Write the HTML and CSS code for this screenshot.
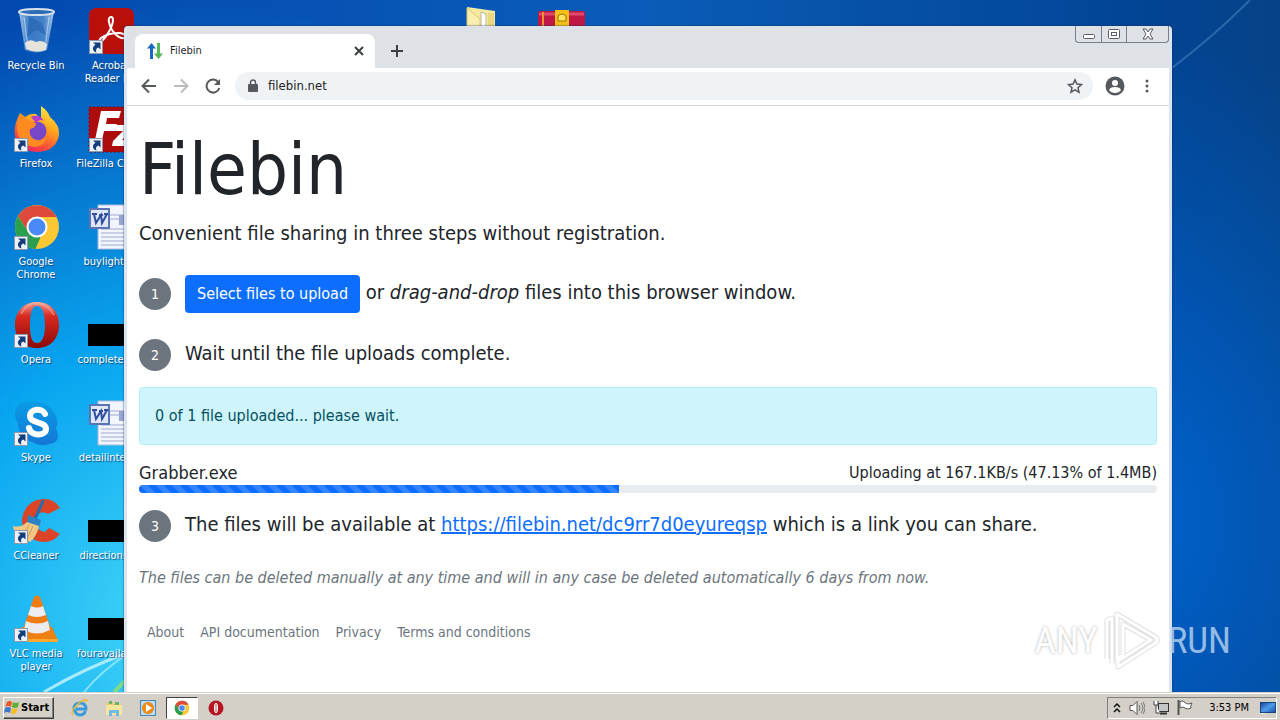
FILE: index.html
```html
<!DOCTYPE html>
<html lang="en">
<head>
    <meta charset="UTF-8">
    <meta name="viewport" content="width=device-width, initial-scale=1.0">
    <title>Filebin</title>
    <link rel="stylesheet" href="styles.css">
</head>
<body>
    <svg class="defs" aria-hidden="true">
        <defs>
            <linearGradient id="fox" x1="0.8" y1="0" x2="0.3" y2="1">
                <stop offset="0" stop-color="#fff04a"/>
                <stop offset="0.4" stop-color="#ffa61e"/>
                <stop offset="0.75" stop-color="#ff5136"/>
                <stop offset="1" stop-color="#e8246b"/>
            </linearGradient>
            <linearGradient id="opera-red" x1="0" y1="0" x2="0" y2="1">
                <stop offset="0" stop-color="#f4a095"/>
                <stop offset="0.3" stop-color="#d92a20"/>
                <stop offset="1" stop-color="#8c0a08"/>
            </linearGradient>
            <linearGradient id="glass" x1="0" y1="0" x2="1" y2="0">
                <stop offset="0" stop-color="#a9cbed"/>
                <stop offset="0.3" stop-color="#3f7fc8"/>
                <stop offset="0.7" stop-color="#4a88cc"/>
                <stop offset="1" stop-color="#b4d0ee"/>
            </linearGradient>
            <linearGradient id="skype-blue" x1="0" y1="0" x2="0" y2="1">
                <stop offset="0" stop-color="#0a9ce6"/>
                <stop offset="1" stop-color="#1477d6"/>
            </linearGradient>
            <linearGradient id="screen-blue" x1="0" y1="0" x2="1" y2="1">
                <stop offset="0" stop-color="#123f96"/>
                <stop offset="0.5" stop-color="#4d9bea"/>
                <stop offset="1" stop-color="#1450a8"/>
            </linearGradient>
        </defs>
        <symbol id="arrow" viewBox="0 0 14 14">
            <rect width="14" height="14" fill="#eef1f6"/>
            <rect x="0.5" y="0.5" width="13" height="13" fill="none" stroke="#8d9aae"/>
            <path d="M4 2.500h7.500v7L9.300 7.500C7 8.500 6.500 10 7.500 12.500C3.500 11.500 2.500 7 6.500 4.800z" fill="#143f7d"/>
        </symbol>
        <symbol id="chrome" viewBox="0 0 48 48">
            <circle cx="24" cy="24" r="22" fill="#fbc834"/>
            <path d="M24 14h19.500A22 22 0 0 0 5 13L15.300 29z" fill="#dd4a3c"/>
            <path d="M5 13L15.300 29A10 10 0 0 0 28 33L22.500 46A22 22 0 0 1 5 13z" fill="#2b9f50"/>
            <circle cx="24" cy="24" r="10.500" fill="#fff"/>
            <circle cx="24" cy="24" r="8.500" fill="#4a8af4"/>
        </symbol>
        <symbol id="word" viewBox="0 0 48 48">
            <path d="M11 2h27l8 7v37H11z" fill="#f3f5fc" stroke="#aeb8da"/>
            <path d="M22 12h20M22 16h20M14 26h28M14 30h28M14 34h28M14 38h28M14 42h28" stroke="#9fabce"/>
            <rect x="32" y="12" width="12" height="10" fill="#97a5d0"/>
            <rect x="3" y="6" width="19" height="19" fill="#dfe6f8" stroke="#5a74b6" stroke-width="2"/>
            <path d="M7 11L9 20L14 12L15 20L20 11M5 11h5M12 12h4M17 11h4" fill="none" stroke="#2f4f9e" stroke-width="2"/>
        </symbol>
        <symbol id="console" viewBox="0 0 48 48">
            <rect x="1" y="23" width="46" height="22" fill="#000"/>
        </symbol>
    </svg>

    <div class="desktop">
        <main class="workspace">
            <svg class="wallpaper" viewBox="0 0 1280 692" preserveAspectRatio="none" aria-hidden="true">
                <path d="M44 692Q85 668 130 652" fill="none" stroke="#c8f5ff" stroke-width="3" opacity="0.8"/>
                <path d="M84 692Q100 672 130 652" fill="none" stroke="#b0f0ff" stroke-width="2" opacity="0.7"/>
                <path d="M114 692L130 676" stroke="#7cdc8a" stroke-width="4"/>
                <path d="M1172 68Q1215 35 1250 0" fill="none" stroke="#5b93cc" stroke-width="2" opacity="0.45"/>
            </svg>

            <div class="icons">
                <button class="shortcut">
                    <svg viewBox="0 0 48 48">
                        <path d="M7 5L13 43Q24 48 35 43L42 5z" fill="url(#glass)" opacity="0.9"/>
                        <path d="M17 10l13 6l4 12l-10-5l-9 7z" fill="#205ca8" opacity="0.5"/>
                        <path d="M13 36Q18 31 24 35Q30 32 35 37L34 43Q24 47 14 42z" fill="#e6e3dc"/>
                        <ellipse cx="24.500" cy="5" rx="17.500" ry="3" fill="#2e6cb5" stroke="#d5e0ec" stroke-width="2"/>
                        <path d="M12 10l4 31M37 10l-4 31" stroke="#dcecfb" opacity="0.6"/>
                    </svg>
                    <span>Recycle Bin</span>
                </button>
                <button class="shortcut col-2">
                    <svg viewBox="0 0 48 48">
                        <rect x="2" y="1" width="45" height="46" rx="7" fill="#b90f0b"/>
                        <path d="M24 10C20 10 22 18 25 23C29 29 34 32 37 31C40 30 38 26 32 26C25 26 18 28 14 31C11 34 13 36 16 33C21 28 26 18 26 13Q26 10 24 10z" fill="none" stroke="#fff" stroke-width="2"/>
                        <use href="#arrow" x="2" y="33" width="14" height="14"/>
                    </svg>
                    <span>Acrobat Reader DC</span>
                </button>
                <button class="shortcut row-2">
                    <svg viewBox="0 0 48 48">
                        <path d="M29 1Q36 6 38 12Q48 20 47 30Q44 46 26 47Q7 47 3 31Q1 21 8 8L13 12Q18 8 24 9L29 14z" fill="url(#fox)"/>
                        <circle cx="25" cy="26" r="9.500" fill="#7747c9"/>
                        <path d="M19 12Q27 8 32 16Q28 13 24 18z" fill="#b53ad0"/>
                        <path d="M8 9Q15 16 24 18Q24 23 18 24Q16 33 25 35Q32 36 36 30Q32 45 18 41Q5 36 5 22z" fill="#ff8a22"/>
                        <use href="#arrow" x="2" y="33" width="14" height="14"/>
                    </svg>
                    <span>Firefox</span>
                </button>
                <button class="shortcut row-2 col-2">
                    <svg viewBox="0 0 48 48">
                        <rect x="2" y="2" width="45" height="45" fill="#ad0c0d" stroke="#7b0b12" stroke-dasharray="2 2"/>
                        <path d="M14 6H34L32 13H20L19 19H30L28 26H17L14 40H7z" fill="#fff"/>
                        <path d="M29 20H46L45 25L35 35H43L42 41H25L26 36L36 26H28z" fill="#fff"/>
                        <use href="#arrow" x="2" y="33" width="14" height="14"/>
                    </svg>
                    <span>FileZilla Client</span>
                </button>
                <button class="shortcut row-3">
                    <svg viewBox="0 0 48 48">
                        <use href="#chrome" x="1" width="48" height="48"/>
                        <use href="#arrow" x="2" y="33" width="14" height="14"/>
                    </svg>
                    <span>Google Chrome</span>
                </button>
                <button class="shortcut row-3 col-2">
                    <svg viewBox="0 0 48 48"><use href="#word" width="48" height="48"/></svg>
                    <span>buylight.rtf</span>
                </button>
                <button class="shortcut row-4">
                    <svg viewBox="0 0 48 48">
                        <path fill-rule="evenodd" d="M25 1C39 1 47 11 47 24S39 47 25 47S3 37 3 24S11 1 25 1zM25 5C20 5 18 12 18 24S20 42 25 42S33 36 33 24S30 5 25 5z" fill="url(#opera-red)"/>
                        <path d="M9 13Q15 2 25 2Q36 3 42 14" fill="none" stroke="#f9c8c0" stroke-width="2" opacity="0.4"/>
                        <use href="#arrow" x="2" y="33" width="14" height="14"/>
                    </svg>
                    <span>Opera</span>
                </button>
                <button class="shortcut row-4 col-2">
                    <svg viewBox="0 0 48 48"><use href="#console" width="48" height="48"/></svg>
                    <span>completed.rtf</span>
                </button>
                <button class="shortcut row-5">
                    <svg viewBox="0 0 48 48">
                        <path d="M4 10Q7 2 16 3Q35 0 43 15Q47 23 44 29Q50 43 38 45Q28 48 20 43Q5 37 6 24Q1 18 4 10z" fill="url(#skype-blue)"/>
                        <path d="M33 15C31 9 18 9 18 17C18 25 34 22 34 30C34 37 19 38 17 29" fill="none" stroke="#fff" stroke-width="6" stroke-linecap="round"/>
                        <use href="#arrow" x="2" y="33" width="14" height="14"/>
                    </svg>
                    <span>Skype</span>
                </button>
                <button class="shortcut row-5 col-2">
                    <svg viewBox="0 0 48 48"><use href="#word" width="48" height="48"/></svg>
                    <span>detailinter.rtf</span>
                </button>
                <button class="shortcut row-6">
                    <svg viewBox="0 0 48 48">
                        <path d="M48 11L36 17Q28 12 23 22Q22 33 33 35L37 31L48 37Q39 48 25 44Q10 38 10 22Q13 4 30 2Q42 1 48 11z" fill="#db4427"/>
                        <path d="M31 4L23 22" stroke="#216eb0" stroke-width="3" stroke-linecap="round"/>
                        <path d="M16 18L29 23L27 31L15 26z" fill="#2d82c5"/>
                        <path d="M15 25L27 29Q25 39 18 45L5 39Q1 32 1 29Q9 31 15 25z" fill="#f0c783"/>
                        <path d="M17 28L10 40M21 29L15 42" stroke="#d19d52"/>
                        <use href="#arrow" x="2" y="33" width="14" height="14"/>
                    </svg>
                    <span>CCleaner</span>
                </button>
                <button class="shortcut row-6 col-2">
                    <svg viewBox="0 0 48 48"><use href="#console" width="48" height="48"/></svg>
                    <span>directions.rtf</span>
                </button>
                <button class="shortcut row-7">
                    <svg viewBox="0 0 48 48">
                        <path d="M10 32H40L46 46H4z" fill="#ee8114"/>
                        <path d="M4 44H46V47H4z" fill="#ffa72f"/>
                        <path d="M22 2Q25 -1 28 2L39 34Q25 46 11 34z" fill="#f07c16"/>
                        <path d="M19 11Q25 14 31 11L34 20Q25 24 16 20z" fill="#eeeef1"/>
                        <path d="M14 26Q25 31 36 26L38 35Q25 42 12 35z" fill="#ececef"/>
                        <use href="#arrow" x="2" y="33" width="14" height="14"/>
                    </svg>
                    <span>VLC media player</span>
                </button>
                <button class="shortcut row-7 col-2">
                    <svg viewBox="0 0 48 48"><use href="#console" width="48" height="48"/></svg>
                    <span>fouravaila.jpg</span>
                </button>
                <button class="shortcut col-7" aria-label="Folder">
                    <svg viewBox="0 0 48 48">
                        <path d="M5 0L33 4V30H5z" fill="#f5e8a0"/>
                        <path d="M19 5L24 7V30H19z" fill="#fff" stroke="#b8bba0"/>
                        <path d="M5 1L18 12V30H5z" fill="#f9efb0" stroke="#d9c770"/>
                        <path d="M26 6h6V30H26z" fill="#ead77d"/>
                    </svg>
                </button>
                <button class="shortcut col-8" aria-label="Archive">
                    <svg viewBox="0 0 48 48">
                        <rect x="1" y="4" width="47" height="24" rx="2" fill="#c01845"/>
                        <path d="M2 7h45" stroke="#dd4a6c" stroke-width="3"/>
                        <path d="M6 5v19" stroke="#f0902c" stroke-width="2"/>
                        <rect x="18" y="3" width="14" height="24" fill="#f3c018"/>
                        <path d="M21 14V9Q25 5 29 9V14z" fill="#ffe35c" stroke="#a36b08"/>
                    </svg>
                </button>
            </div>

            <section class="window">
                <header class="tab-strip">
                    <div class="tab">
                        <svg width="16" height="16" viewBox="0 0 16 16">
                            <path d="M4.500 0L9 5.500H6V16H3V5.500H0z" fill="#1769c2"/>
                            <path d="M10 0H13V10.500H16L11.500 16L7 10.500H10z" fill="#55b95b"/>
                        </svg>
                        <span class="tab-title">Filebin</span>
                        <button class="icon-button" aria-label="Close tab">
                            <svg width="10" height="10" viewBox="0 0 10 10"><path d="M1 1l8 8M9 1l-8 8" stroke="#3c4043" stroke-width="2"/></svg>
                        </button>
                    </div>
                    <button class="icon-button new-tab" aria-label="New tab">
                        <svg width="12" height="12" viewBox="0 0 12 12"><path d="M6 0v12M0 6h12" stroke="#3c4043" stroke-width="2"/></svg>
                    </button>
                    <div class="window-controls">
                        <button aria-label="Minimize">
                            <svg width="14" height="12" viewBox="0 0 14 12"><rect x="1.500" y="6.500" width="11" height="4" rx="1" fill="#fff" stroke="#555b66"/></svg>
                        </button>
                        <button aria-label="Maximize">
                            <svg width="12" height="12" viewBox="0 0 12 12"><rect x="0.500" y="1.500" width="11" height="9" rx="1" fill="#fff" stroke="#555b66"/><rect x="3.500" y="4.500" width="5" height="3" fill="#fff" stroke="#555b66"/></svg>
                        </button>
                        <button class="close" aria-label="Close">
                            <svg width="12" height="12" viewBox="0 0 12 12"><path d="M1 1h3l2 3l2-3h3L8 6l3 5H8L6 8l-2 3H1l3-5z" fill="#fff" stroke="#555b66"/></svg>
                        </button>
                    </div>
                </header>

                <nav class="toolbar">
                    <button class="icon-button" aria-label="Back">
                        <svg width="16" height="16" viewBox="0 0 16 16"><path d="M15 8H2M8 1.500L1.500 8L8 14.500" fill="none" stroke="#55585c" stroke-width="2"/></svg>
                    </button>
                    <button class="icon-button" aria-label="Forward" disabled>
                        <svg width="16" height="16" viewBox="0 0 16 16"><path d="M1 8H14M8 1.500L14.500 8L8 14.500" fill="none" stroke="#b9bbbe" stroke-width="2"/></svg>
                    </button>
                    <button class="icon-button" aria-label="Reload">
                        <svg width="16" height="16" viewBox="0 0 16 16"><path d="M13.500 4.500A6.500 6.500 0 1 0 14.300 10" fill="none" stroke="#55585c" stroke-width="2"/><path d="M15 1V7H9z" fill="#55585c"/></svg>
                    </button>
                    <div class="address-bar">
                        <svg width="10" height="14" viewBox="0 0 10 14"><rect x="0" y="5" width="10" height="8" rx="1" fill="#55585c"/><path d="M2.500 6V3.500a2.500 2.500 0 0 1 5 0V6" fill="none" stroke="#55585c" stroke-width="1.500"/></svg>
                        <input type="text" value="filebin.net" aria-label="Address">
                        <button class="icon-button" aria-label="Bookmark">
                            <svg width="16" height="16" viewBox="0 0 16 16"><path d="M8 1.800L9.900 6.100L14.500 6.600L11 9.700L12 14.200L8 11.800L4 14.200L5 9.700L1.500 6.600L6.100 6.100z" fill="none" stroke="#55585c" stroke-width="1.500"/></svg>
                        </button>
                    </div>
                    <button class="icon-button profile" aria-label="Profile">
                        <svg width="20" height="20" viewBox="0 0 20 20"><circle cx="10" cy="10" r="9.500" fill="#55585c"/><circle cx="10" cy="7" r="3" fill="#fff"/><path d="M4 14Q5 11 10 11T16 14Q14 17 10 17T4 14z" fill="#fff"/></svg>
                    </button>
                    <button class="icon-button" aria-label="Menu">
                        <svg width="4" height="14" viewBox="0 0 4 14"><g fill="#55585c"><circle cx="2" cy="2" r="1.500"/><circle cx="2" cy="7" r="1.500"/><circle cx="2" cy="12" r="1.500"/></g></svg>
                    </button>
                </nav>

                <article class="page">
                    <h1>Filebin</h1>
                    <p class="lead">Convenient file sharing in three steps without registration.</p>

                    <div class="step upload-step">
                        <span class="step-number">1</span>
                        <p><button class="upload-button">Select files to upload</button> or <em>drag-and-drop</em> files into this browser window.</p>
                    </div>
                    <div class="step">
                        <span class="step-number">2</span>
                        <p>Wait until the file uploads complete.</p>
                    </div>

                    <div class="alert" role="status">0 of 1 file uploaded... please wait.</div>

                    <div class="file-row">
                        <span class="file-name">Grabber.exe</span>
                        <span class="file-speed">Uploading at 167.1KB/s (47.13% of 1.4MB)</span>
                    </div>
                    <div class="progress" role="progressbar" aria-valuenow="47.13" aria-valuemin="0" aria-valuemax="100" aria-label="Grabber.exe">
                        <div class="progress-bar" style="width: 47.13%"></div>
                    </div>

                    <div class="step">
                        <span class="step-number">3</span>
                        <p>The files will be available at <a href="https://filebin.net/dc9rr7d0eyureqsp">https://filebin.net/dc9rr7d0eyureqsp</a> which is a link you can share.</p>
                    </div>

                    <p class="note"><em>The files can be deleted manually at any time and will in any case be deleted automatically 6 days from now.</em></p>

                    <footer class="page-footer">
                        <a href="#about">About</a>
                        <a href="#api">API documentation</a>
                        <a href="#privacy">Privacy</a>
                        <a href="#terms">Terms and conditions</a>
                    </footer>
                </article>
            </section>

            <div class="watermark">
                <span>ANY</span>
                <svg width="60" height="64" viewBox="0 0 60 64">
                    <g fill="none" stroke-linejoin="round">
                        <path d="M4 50V11L9 9V55M14 50V5L54 29V33L15 58V52L48 31L20 15V46z" stroke="#b4b4b4" stroke-width="5" opacity="0.5"/>
                        <path d="M4 50V11L9 9V55M14 50V5L54 29V33L15 58V52L48 31L20 15V46z" stroke="#fff" stroke-width="3"/>
                    </g>
                </svg>
                <span class="run">RUN</span>
            </div>
        </main>

        <footer class="taskbar">
            <button class="start">
                <svg width="16" height="15" viewBox="0 0 16 15">
                    <path d="M3 2Q6 0 8 2L7 7Q4 5 1 7z" fill="#e75a24"/>
                    <path d="M9 2Q12 4 15 2L14 7Q11 9 8 7z" fill="#63ad35"/>
                    <path d="M1 8Q4 6 7 8L6 13Q3 11 0 13z" fill="#3d79ce"/>
                    <path d="M8 8Q11 10 14 8L12 13Q9 15 7 13z" fill="#f5bd20"/>
                </svg>
                Start
            </button>
            <button class="task" aria-label="Internet Explorer">
                <svg width="18" height="18" viewBox="0 0 18 18">
                    <path d="M14.500 12Q13 16 9 16T3 10Q3 4 9 4T15 10H5" fill="none" stroke="#399bdc" stroke-width="3"/>
                    <path d="M2 16Q-1 13 6 6T17 2Q16 1 14 2" fill="none" stroke="#e9b934" stroke-width="1.500"/>
                </svg>
            </button>
            <button class="task" aria-label="Explorer">
                <svg width="18" height="18" viewBox="0 0 18 18">
                    <path d="M2 3h6l1 2h7v11H2z" fill="#e8c86b"/>
                    <path d="M4 2h3v3H4zM10 3h4v3h-4z" fill="#68b46e"/>
                    <path d="M1 6h16v10H1z" fill="#f8e69c"/>
                    <path d="M4 17V11h10v6h-3v-3H7v3z" fill="#73b9e6"/>
                </svg>
            </button>
            <button class="task" aria-label="Media Player">
                <svg width="18" height="18" viewBox="0 0 18 18">
                    <rect x="1.500" y="1.500" width="15" height="15" fill="#b9d9ef" stroke="#4d8ab8"/>
                    <circle cx="9" cy="9" r="6" fill="#ee8a16"/>
                    <path d="M7 5l6 4l-6 4z" fill="#fff"/>
                </svg>
            </button>
            <button class="task active" aria-label="Chrome">
                <svg width="16" height="16" viewBox="0 0 48 48"><use href="#chrome" width="48" height="48"/></svg>
            </button>
            <button class="task" aria-label="Opera">
                <svg width="16" height="16" viewBox="0 0 16 16"><circle cx="8" cy="8" r="7.500" fill="#b51520"/><ellipse cx="8" cy="8" rx="2" ry="5" fill="#fff"/><path d="M8 4v8" stroke="#d44a4a"/></svg>
            </button>

            <div class="tray">
                <svg width="8" height="12" viewBox="0 0 8 12"><path d="M1 5l3-3l3 3M1 10l3-3l3 3" fill="none" stroke="#111" stroke-width="1.500"/></svg>
                <svg width="16" height="14" viewBox="0 0 16 14"><path d="M1 4.500h3l4-4v13l-4-4H1z" fill="#fff" stroke="#555"/><path d="M10 4q2 3 0 6M12 2q4 5 0 10M14 1q4 6 0 12" fill="none" stroke="#777"/></svg>
                <svg width="16" height="14" viewBox="0 0 16 14"><rect x="5.500" y="2.500" width="10" height="8" fill="#c3c6c8" stroke="#333"/><path d="M7 12.500h7" stroke="#333" stroke-width="2"/><path d="M1 0v4h4V0M3 4v8h4" fill="#fff" stroke="#444"/></svg>
                <svg width="16" height="15" viewBox="0 0 16 15"><path d="M1.500 0v15" stroke="#555" stroke-width="2"/><path d="M3 1.500Q6 0 8 2.500T15 3Q13 6 14 8Q10 10 8 8T3 8z" fill="#fff" stroke="#555"/></svg>
                <time>3:53 PM</time>
                <svg width="16" height="12" viewBox="0 0 16 12"><rect x="0.500" y="0.500" width="15" height="10" fill="url(#screen-blue)" stroke="#174580"/><path d="M1 11.500h4" stroke="#eee"/></svg>
            </div>
        </footer>
    </div>
</body>
</html>
```
FILE: styles.css
```css
* {
    box-sizing: border-box;
}

body {
    margin: 0;
    font-family: "DejaVu Sans Condensed", "Noto Sans", sans-serif;
    font-size: 16px;
    line-height: 24px;
    color: #212529;
}

button {
    font: inherit;
    color: inherit;
    padding: 0;
    border: 0;
    background: none;
}

svg {
    display: block;
    flex: none;
}

h1, p {
    margin: 0;
}

.defs {
    position: absolute;
    width: 0;
    height: 0;
}

.desktop {
    display: flex;
    flex-direction: column;
    min-height: 100vh;
}

.workspace {
    position: relative;
    flex: 1;
    overflow: hidden;
    background:
        radial-gradient(ellipse 45% 90% at 14% 90%, #45d8f8 0%, #08a5f0 45%, rgba(0, 128, 222, 0) 100%),
        radial-gradient(ellipse 30% 70% at 88% 75%, #0062cc 0%, rgba(0, 80, 176, 0) 100%),
        linear-gradient(to right, #0349b0 0%, #0a5cb8 50%, #024494 90%, #064287 100%);
}

.wallpaper {
    position: absolute;
    width: 100%;
    height: 100%;
}

/* desktop icons */
.icons {
    position: relative;
    display: grid;
    grid-template-columns: repeat(8, 75px);
    grid-template-rows: repeat(7, 98px);
}

.shortcut {
    grid-column: 1;
    grid-row: 1;
    display: flex;
    flex-direction: column;
    align-items: center;
    gap: 4px;
    padding-top: 7px;
    margin-right: 3px;
    font-size: 11px;
    line-height: 13px;
    color: #fff;
    text-shadow: 1px 1px 1px #124478;
}

.shortcut svg {
    width: 48px;
    height: 48px;
}

.col-2 { grid-column: 2; }
.col-7 { grid-column: 7; }
.col-8 { grid-column: 8; }
.row-2 { grid-row: 2; }
.row-3 { grid-row: 3; }
.row-4 { grid-row: 4; }
.row-5 { grid-row: 5; }
.row-6 { grid-row: 6; }
.row-7 { grid-row: 7; }

/* browser window */
.window {
    position: absolute;
    top: 26px;
    right: 108px;
    bottom: 0;
    left: 124px;
    display: flex;
    flex-direction: column;
    border-left: 3px solid #dce4f0;
    border-right: 3px solid #dce4f0;
    border-radius: 4px 4px 0 0;
    background: #fff;
    box-shadow: 0 0 2px #12305a;
}

.tab-strip {
    display: flex;
    align-items: flex-end;
    height: 42px;
    padding-left: 8px;
    background: #dee1e6;
}

.tab {
    display: flex;
    align-items: center;
    gap: 7px;
    width: 240px;
    height: 34px;
    padding: 0 11px 0 12px;
    border-radius: 8px 8px 0 0;
    background: #fff;
    font-size: 11px;
}

.tab-title {
    flex: 1;
}

.icon-button {
    display: flex;
    align-items: center;
    justify-content: center;
}

.new-tab {
    height: 34px;
    margin-left: 16px;
}

.window-controls {
    display: flex;
    align-self: flex-start;
    margin-left: auto;
    border: 1px solid #7a808b;
    border-top: 0;
    border-radius: 0 0 4px 4px;
}

.window-controls button {
    display: flex;
    align-items: center;
    justify-content: center;
    width: 25px;
    height: 16px;
}

.window-controls button + button {
    border-left: 1px solid #7a808b;
}

.window-controls .close {
    width: 42px;
}

.toolbar {
    display: flex;
    align-items: center;
    gap: 16px;
    height: 38px;
    padding: 0 20px 2px 14px;
    border-bottom: 1px solid #d5d8dc;
}

.address-bar {
    flex: 1;
    display: flex;
    align-items: center;
    gap: 10px;
    height: 28px;
    margin: 0 -4px 0 -2px;
    padding: 0 10px 0 13px;
    border-radius: 14px;
    background: #f0f3f5;
}

.address-bar input {
    flex: 1;
    min-width: 0;
    padding: 0;
    border: 0;
    background: none;
    font: inherit;
    font-size: 13px;
    color: #202124;
}

.profile {
    margin-right: 4px;
}

/* page */
.page {
    flex: 1;
    padding: 20px 12px;
}

.page h1 {
    margin-bottom: 6px;
    font-size: 72px;
    font-weight: 400;
    line-height: 86px;
}

.lead {
    margin-bottom: 27px;
    font-size: 20px;
    line-height: 30px;
}

.step {
    display: flex;
    align-items: flex-start;
    gap: 14px;
    font-size: 20px;
    line-height: 28px;
}

.upload-step {
    align-items: center;
    margin-bottom: 26px;
}

.step-number {
    flex: none;
    width: 32px;
    height: 32px;
    border-radius: 50%;
    background: #6c757d;
    color: #fff;
    font-size: 14px;
    line-height: 32px;
    text-align: center;
}

.upload-button {
    height: 38px;
    padding: 0 12px;
    border-radius: 4px;
    background: #0d6efd;
    color: #fff;
    font-size: 16px;
}

.step a {
    color: #0d6efd;
}

.alert {
    margin: 16px 0;
    padding: 16px 15px;
    border: 1px solid #b6effb;
    border-radius: 4px;
    background: #cff4fc;
    color: #055160;
}

.file-row {
    display: flex;
    justify-content: space-between;
}

.file-name {
    font-size: 18px;
}

.progress {
    height: 8px;
    margin-bottom: 17px;
    border-radius: 4px;
    background: #e9ecef;
    overflow: hidden;
}

.progress-bar {
    height: 100%;
    background: #0d6efd linear-gradient(45deg, rgba(255, 255, 255, 0.15) 25%, transparent 25%, transparent 50%, rgba(255, 255, 255, 0.15) 50%, rgba(255, 255, 255, 0.15) 75%, transparent 75%);
    background-size: 16px 16px;
}

.note {
    margin: 24px 0 32px;
    color: #6c757d;
}

.page-footer {
    display: flex;
    gap: 16px;
    padding-left: 8px;
    font-size: 14px;
    line-height: 21px;
}

.page-footer a {
    color: #6c757d;
    text-decoration: none;
}

.watermark {
    position: absolute;
    right: 49px;
    bottom: 19px;
    display: flex;
    align-items: center;
    gap: 5px;
    color: #fff;
    font-family: "Roboto Condensed", Roboto, sans-serif;
    font-size: 37px;
    line-height: 62px;
    opacity: 0.8;
    text-shadow: 0 0 3px #999;
}

.watermark .run {
    color: #b9d4f1;
    text-shadow: none;
}

/* taskbar */
.taskbar {
    display: flex;
    align-items: center;
    height: 28px;
    padding: 2px 3px 0;
    border-top: 1px solid #d4d0c8;
    background: #d4d0c8;
    box-shadow: inset 0 1px #fff;
}

.start {
    display: flex;
    align-items: center;
    gap: 1px;
    width: 51px;
    height: 22px;
    margin-right: 10px;
    border: 1px solid #fff;
    border-right-color: #404040;
    border-bottom-color: #404040;
    box-shadow: inset -1px -1px #808080;
    font-size: 11px;
    font-weight: 700;
    color: #000;
}

.task {
    display: flex;
    align-items: center;
    justify-content: center;
    width: 32px;
    height: 22px;
    margin-right: 2px;
}

.task.active {
    border: 1px solid #fff;
    border-top-color: #404040;
    border-left-color: #404040;
    background: #fff;
}

.tray {
    display: flex;
    align-items: center;
    gap: 8px;
    height: 22px;
    margin-left: auto;
    padding: 0 0 0 5px;
    border: 1px solid #fff;
    border-top-color: #808080;
    border-left-color: #808080;
    font-size: 11px;
    color: #000;
}

.tray time {
    margin: 0 3px 0 8px;
}
```
